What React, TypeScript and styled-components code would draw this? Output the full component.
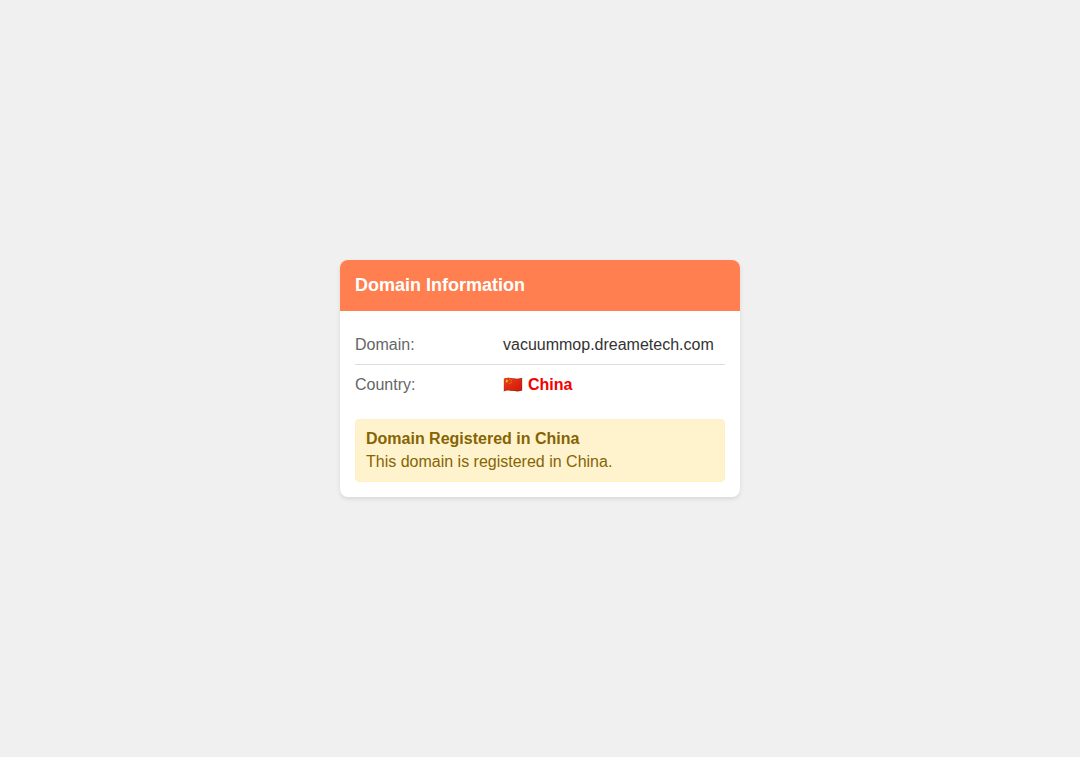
import React from "react";
import styled, { createGlobalStyle } from "styled-components";

const GlobalStyle = createGlobalStyle`
  * {
    box-sizing: border-box;
  }

  body {
    margin: 0;
    background: #f0f0f0;
    color: #333;
    font-family: "Liberation Sans", Arial, sans-serif;
    font-size: 16px;
  }
`;

const Page = styled.main`
  display: flex;
  align-items: center;
  justify-content: center;
  min-height: 100vh;
`;

const Card = styled.section`
  width: 100%;
  max-width: 400px;
  overflow: hidden;
  border-radius: 8px;
  background: #fff;
  box-shadow: 0 2px 4px rgba(0, 0, 0, 0.1);
`;

const CardHeader = styled.header`
  padding: 15px;
  background: #ff7f50;
  color: #fff;
`;

const Title = styled.h1`
  margin: 0;
  font-size: 18px;
  font-weight: bold;
  line-height: 21px;
`;

const CardBody = styled.div`
  padding: 15px;
`;

const Details = styled.dl`
  margin: 0;
`;

const Row = styled.div`
  display: grid;
  grid-template-columns: 2fr 3fr;
  align-items: baseline;
  padding: 10px 0;
  line-height: normal;

  & + & {
    border-top: 1px solid #ddd;
  }
`;

const Label = styled.dt`
  color: #666;
`;

const Value = styled.dd<{ $alert?: boolean }>`
  margin: 0;
  color: ${({ $alert }) => ($alert ? "#f40000" : "#333")};
  font-weight: ${({ $alert }) => ($alert ? "bold" : "normal")};
`;

const Flag = styled.span`
  margin-right: 5px;
`;

const Notice = styled.div`
  display: grid;
  gap: 5px;
  margin-top: 15px;
  padding: 10px;
  border: 1px solid #fff0c4;
  border-radius: 4px;
  background: #fff3cd;
  color: #856404;
  line-height: 18px;
`;

const NoticeText = styled.p`
  margin: 0;
`;

export default function App() {
  return (
    <>
      <GlobalStyle />
      <Page>
        <Card>
          <CardHeader>
            <Title>Domain Information</Title>
          </CardHeader>
          <CardBody>
            <Details>
              <Row>
                <Label>Domain:</Label>
                <Value>vacuummop.dreametech.com</Value>
              </Row>
              <Row>
                <Label>Country:</Label>
                <Value $alert>
                  <Flag>🇨🇳</Flag>China
                </Value>
              </Row>
            </Details>
            <Notice>
              <strong>Domain Registered in China</strong>
              <NoticeText>This domain is registered in China.</NoticeText>
            </Notice>
          </CardBody>
        </Card>
      </Page>
    </>
  );
}
